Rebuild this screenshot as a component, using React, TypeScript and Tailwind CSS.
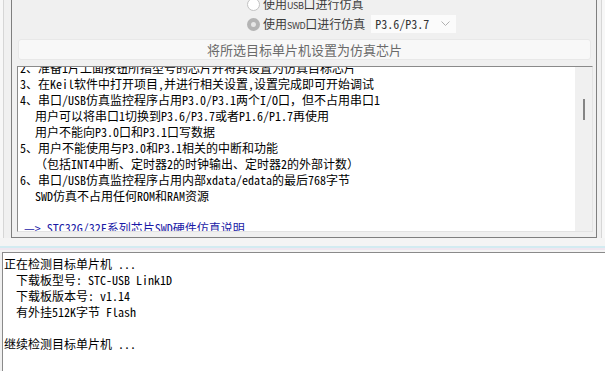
import React from "react";

const songFont = {
  fontFamily: '"Noto Sans Mono CJK SC", "Noto Sans CJK SC", "DejaVu Sans Mono", monospace',
};

interface Line {
  text: string;
  indent?: boolean;
  link?: boolean;
}

const notes: Line[] = [
  { text: "2、准备1片上面按钮所指型号的芯片并将其设置为仿真目标芯片" },
  { text: "3、在Keil软件中打开项目,并进行相关设置,设置完成即可开始调试" },
  { text: "4、串口/USB仿真监控程序占用P3.0/P3.1两个I/O口，但不占用串口1" },
  { text: "用户可以将串口1切换到P3.6/P3.7或者P1.6/P1.7再使用", indent: true },
  { text: "用户不能向P3.0口和P3.1口写数据", indent: true },
  { text: "5、用户不能使用与P3.0和P3.1相关的中断和功能" },
  { text: "（包括INT4中断、定时器2的时钟输出、定时器2的外部计数）", indent: true },
  { text: "6、串口/USB仿真监控程序占用内部xdata/edata的最后768字节" },
  { text: "SWD仿真不占用任何ROM和RAM资源", indent: true },
  { text: "" },
  { text: "—> STC32G/32F系列芯片SWD硬件仿真说明", link: true },
];

const logLines = [
  "正在检测目标单片机 ...",
  "  下载板型号: STC-USB Link1D",
  "  下载板版本号: v1.14",
  "  有外挂512K字节 Flash",
  "",
  "继续检测目标单片机 ...",
];

const Radio = ({ checked }: { checked?: boolean }) =>
  checked ? (
    <span className="w-[13px] h-[13px] rounded-full bg-[#b4b4b4] flex items-center justify-center">
      <span className="w-[5px] h-[5px] rounded-full bg-[#e6e6e6]" />
    </span>
  ) : (
    <span className="w-[13px] h-[13px] rounded-full border border-[#c2c2c2] bg-white" />
  );

// radio label: CJK at 12px, the latin part drawn small as in the original
const Label = ({ pre, latin, post }: { pre: string; latin: string; post: string }) => (
  <span className="text-[12px]">
    {pre}
    <span className="text-[9px] tracking-[-0.4px]">{latin}</span>
    {post}
  </span>
);

const App = () => {
  return (
    <div className="w-[605px] h-[371px] overflow-hidden bg-[#f0f0f0] flex flex-col">
      {/* upper panel */}
      <div className="flex h-[238px] shrink-0">
        <div className="w-[3px] bg-[#f7f7f7]" />
        <div className="flex-1 border-l border-r border-[#d6d6d6] bg-[#f0f0f0] pl-[7px] pr-[4px]">
          <div className="h-full border-l border-r border-b border-[#7f7f7f] flex flex-col">
            {/* radio options */}
            <div className="flex flex-col pl-[235px] -mt-[6px] text-[#3c3c3c] font-['Noto_Sans_CJK_SC',sans-serif]">
              <div className="flex items-center h-[20px] gap-[3px]">
                <Radio />
                <Label pre="使用" latin="USB" post="口进行仿真" />
              </div>
              <div className="flex items-center h-[20px] gap-[3px]">
                <Radio checked />
                <Label pre="使用" latin="SWD" post="口进行仿真" />
                <div className="ml-[3px] w-[85px] h-[18px] bg-[#fbfbfb] flex items-center justify-between pl-[4px] pr-[6px]">
                  <span className="text-[12px] text-[#333]" style={songFont}>
                    P3.6/P3.7
                  </span>
                  <svg width="9" height="6" viewBox="0 0 9 6">
                    <path d="M0.5 0.5 L4.5 4.5 L8.5 0.5" fill="none" stroke="#b0b0b0" strokeWidth="1" />
                  </svg>
                </div>
              </div>
            </div>

            {/* action button */}
            <div className="ml-[6px] mr-[5px] mt-[5px] h-[21px] rounded-[3px] bg-[#f8f8f8] border border-[#e8e8e8] flex items-center justify-center text-[13px] text-[#6a6a6a] font-['Noto_Sans_CJK_SC',sans-serif]">
              将所选目标单片机设置为仿真芯片
            </div>

            {/* notes box */}
            <div className="ml-[5px] mr-[3px] mt-[6px] h-[166px] border-t border-l border-[#8a8a8a] border-b border-r border-b-[#e3e3e3] border-r-[#e3e3e3] bg-white flex overflow-hidden">
              <div className="flex-1 overflow-hidden pl-[2px]">
                <div className="-mt-[7px] text-[12px] leading-[16px] text-black whitespace-pre" style={songFont}>
                  {notes.map((l, i) => (
                    <div
                      key={i}
                      className={`h-[16px] ${l.indent ? "pl-[15px]" : ""} ${l.link ? "pl-[4px] text-[#1a1aa6]" : ""}`}
                    >
                      {l.text}
                    </div>
                  ))}
                </div>
              </div>
              <div className="w-[17px] bg-[#f0f0f0] flex justify-center pt-[32px]">
                <div className="w-[2px] h-[21px] bg-[#858585]" />
              </div>
            </div>
          </div>
        </div>
        <div className="w-[3px] bg-[#f7f7f7]" />
      </div>

      {/* splitter */}
      <div className="h-[14px] shrink-0 flex flex-col bg-[#f4f4f4]">
        <div className="h-[8px]" />
        <div className="h-[2px] bg-[#d3ebf1]" />
        <div className="h-[2px] bg-[#efe6ef]" />
      </div>

      {/* log box */}
      <div className="flex-1 ml-[2px] border-l border-t border-[#8a8a8a] bg-white pl-[1px] pt-[3px]">
        <div className="text-[12px] leading-[16px] text-black whitespace-pre" style={songFont}>
          {logLines.map((l, i) => (
            <div key={i} className="h-[16px]">
              {l}
            </div>
          ))}
        </div>
      </div>
    </div>
  );
};

export default App;
